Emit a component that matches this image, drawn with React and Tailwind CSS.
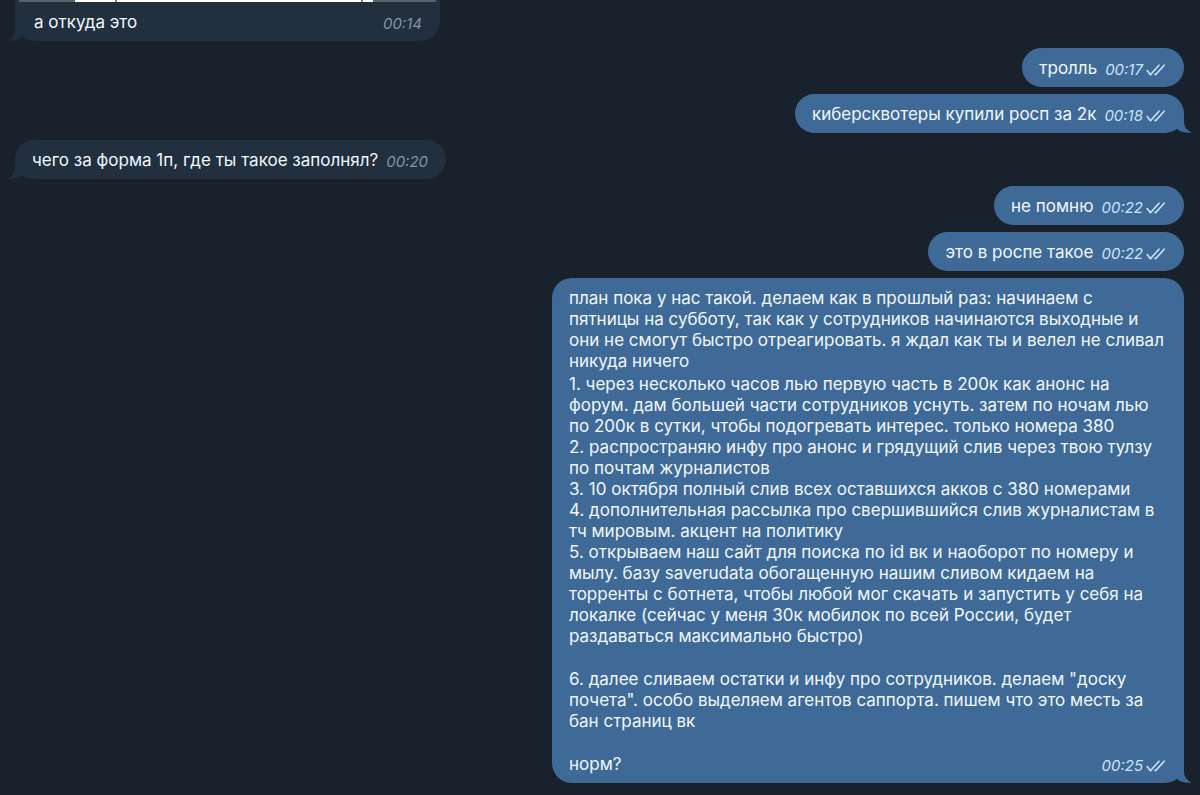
import React from "react";
import clsx from "clsx";

const messages = [
  { id: 1, time: "00:14", text: "а откуда это", photo: true, tail: true },
  { id: 2, time: "00:17", text: "тролль", own: true },
  { id: 3, time: "00:18", text: "киберсквотеры купили росп за 2к", own: true, tail: true },
  { id: 4, time: "00:20", text: "чего за форма 1п, где ты такое заполнял?", tail: true },
  { id: 5, time: "00:22", text: "не помню", own: true },
  { id: 6, time: "00:22", text: "это в роспе такое", own: true },
];

const intro = `план пока у нас такой. делаем как в прошлый раз: начинаем с
пятницы на субботу, так как у сотрудников начинаются выходные и
они не смогут быстро отреагировать. я ждал как ты и велел не сливал
никуда ничего`;

const steps = `1. через несколько часов лью первую часть в 200к как анонс на
форум. дам большей части сотрудников уснуть. затем по ночам лью
по 200к в сутки, чтобы подогревать интерес. только номера 380
2. распространяю инфу про анонс и грядущий слив через твою тулзу
по почтам журналистов
3. 10 октября полный слив всех оставшихся акков с 380 номерами
4. дополнительная рассылка про свершившийся слив журналистам в
тч мировым. акцент на политику
5. открываем наш сайт для поиска по id вк и наоборот по номеру и
мылу. базу saverudata обогащенную нашим сливом кидаем на
торренты с ботнета, чтобы любой мог скачать и запустить у себя на
локалке (сейчас у меня 30к мобилок по всей России, будет
раздаваться максимально быстро)`;

const lastStep = `6. далее сливаем остатки и инфу про сотрудников. делаем "доску
почета". особо выделяем агентов саппорта. пишем что это месть за
бан страниц вк`;

// double tick shown on read messages
const Ticks = () => (
  <svg
    className="h-3 w-5 shrink-0"
    viewBox="0 0 20 12"
    fill="none"
    stroke="currentColor"
    strokeWidth="1.6"
    strokeLinecap="round"
    strokeLinejoin="round"
  >
    <path d="M1.2 6.6L4.4 10.8L13 1.2" />
    <path d="M9 10.2L9.6 10.8L18.2 1.2" />
  </svg>
);

const Tail = ({ own }) => (
  <svg
    className={clsx(
      "absolute bottom-0 h-5 w-5",
      own ? "-right-2 text-[#3f6a97]" : "-left-2 -scale-x-100 text-[#212f3f]"
    )}
    viewBox="0 0 20 20"
    fill="currentColor"
  >
    <path d="M0 0H12V9C12 13.5 15 17.5 20 19.6C14 20.2 8 19 4.5 15.8C3.5 17 2 18 0 18.6Z" />
  </svg>
);

const Meta = ({ time, own }) => (
  <span
    className={clsx(
      "flex shrink-0 items-center gap-[3px] text-[15px] leading-[18px] italic",
      own ? "text-[#c9e4f9]" : "text-[#8594a4]"
    )}
  >
    <time>{time}</time>
    {own && <Ticks />}
  </span>
);

const Bubble = ({ own, tail, className, children }) => (
  <div
    className={clsx(
      "relative max-w-full pt-[10px] pr-[18px] pb-2",
      own ? "self-end bg-[#3f6a97]" : "self-start bg-[#212f3f]",
      className
    )}
  >
    {tail && <Tail own={own} />}
    <div className="relative">{children}</div>
  </div>
);

const Message = ({ text, time, own, tail, photo }) => (
  <Bubble
    own={own}
    tail={tail}
    className={clsx(
      photo ? "w-[425px] rounded-b-[20px] pl-[19px]" : "rounded-[20px] pl-[17px]"
    )}
  >
    <div className={clsx("flex items-end gap-2", photo && "justify-between")}>
      <p>{text}</p>
      <Meta time={time} own={own} />
    </div>
  </Bubble>
);

// bottom edge of the photo that is scrolled out of view
const PhotoEdge = () => (
  <div className="flex h-0.5 w-[425px] max-w-full bg-[#212f3f] px-1">
    <div className="w-14 bg-[#59616b]" />
    <div className="w-10 bg-white" />
    <div className="w-0.5 bg-[#7c828a]" />
    <div className="w-[244px] bg-white" />
    <div className="w-0.5 bg-[#7c828a]" />
    <div className="w-2.5 bg-white" />
    <div className="grow bg-[#59616b]" />
  </div>
);

const App = () => {
  return (
    <main className="min-h-screen overflow-hidden bg-[#19222c] pr-4 pb-3 pl-[15px] font-['Inter','Noto_Sans',sans-serif] text-[17px] leading-[21px] text-[#f0f7fd]">
      <PhotoEdge />
      <div className="flex flex-col gap-[7px]">
        {messages.map((m) => (
          <Message key={m.id} {...m} />
        ))}

        <Bubble own tail className="w-[632px] rounded-[20px] pl-[17px]">
          <div className="flex flex-col gap-[22px] whitespace-pre">
            <div className="flex flex-col gap-0.5">
              <p>{intro}</p>
              <p>{steps}</p>
            </div>
            <p>{lastStep}</p>
            <div className="flex items-end justify-between">
              <p>норм?</p>
              <Meta time="00:25" own />
            </div>
          </div>
        </Bubble>
      </div>
    </main>
  );
};

export default App;
